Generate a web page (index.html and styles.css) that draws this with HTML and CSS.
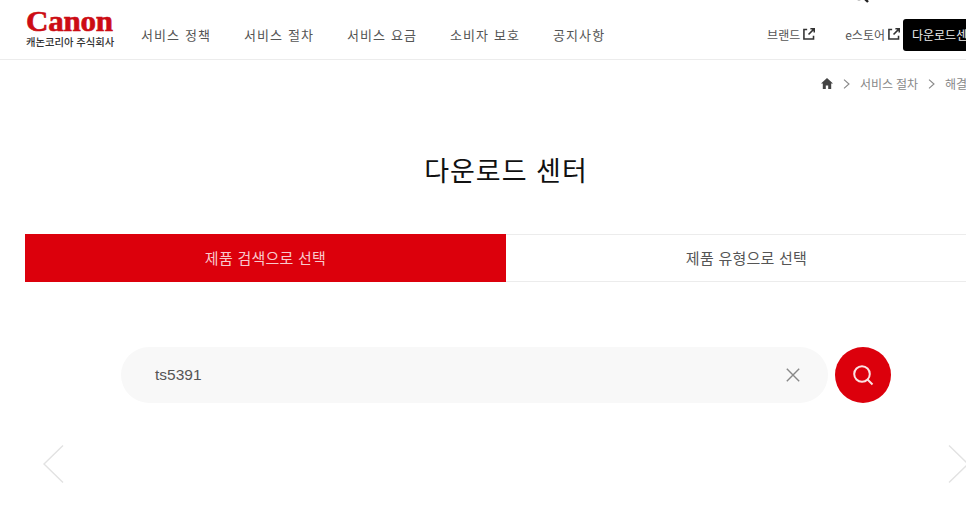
FILE: index.html
```html
<!DOCTYPE html>
<html lang="ko">

<head>
    <meta charset="UTF-8">
    <meta name="viewport" content="width=device-width, initial-scale=1.0">
    <title>다운로드 센터</title>
    <link rel="stylesheet" href="styles.css">
</head>

<body>
    <div class="page">
        <header class="top">
            <a class="logo" href="#">
                <span class="logo-mark">Canon</span>
                <span class="logo-sub">캐논코리아 주식회사</span>
            </a>
            <nav class="menu">
                <a href="#">서비스 정책</a>
                <a href="#">서비스 절차</a>
                <a href="#">서비스 요금</a>
                <a href="#">소비자 보호</a>
                <a href="#">공지사항</a>
            </nav>
            <div class="util">
                <a class="ext" href="#">브랜드
                    <svg width="12" height="12" viewBox="0 0 13 13" fill="none" stroke="#333" stroke-width="1.7">
                        <path d="M4.5 1.6H1V12H11.4V8.5" />
                        <path d="M6 7L12 1M8 .8H12.2V5" />
                    </svg>
                </a>
                <a class="ext ext-store" href="#">e스토어
                    <svg width="12" height="12" viewBox="0 0 13 13" fill="none" stroke="#333" stroke-width="1.7">
                        <path d="M4.5 1.6H1V12H11.4V8.5" />
                        <path d="M6 7L12 1M8 .8H12.2V5" />
                    </svg>
                </a>
                <a class="download" href="#">다운로드센터</a>
            </div>
            <svg class="top-search" width="18" height="18" viewBox="0 0 18 18" fill="none" stroke="#222" stroke-width="2.4">
                <circle cx="8" cy="8" r="6" />
                <path d="M12.5 12.5L17 17" />
            </svg>
        </header>

        <div class="crumbs">
            <svg width="12" height="11" viewBox="0 0 12 11" fill="#444">
                <path d="M6 0L12 5.4H10.2V11H7.2V7.4H4.8V11H1.8V5.4H0Z" />
            </svg>
            <svg class="crumb-arrow" width="7" height="10" viewBox="0 0 7 10" fill="none" stroke="#888" stroke-width="1.1">
                <path d="M1 .6L6 5L1 9.4" />
            </svg>
            <span>서비스 절차</span>
            <svg class="crumb-arrow" width="7" height="10" viewBox="0 0 7 10" fill="none" stroke="#888" stroke-width="1.1">
                <path d="M1 .6L6 5L1 9.4" />
            </svg>
            <span>해결 방법</span>
        </div>

        <h1 class="title">다운로드 센터</h1>

        <div class="tabs">
            <a class="tab active" href="#">제품 검색으로 선택</a>
            <a class="tab" href="#">제품 유형으로 선택</a>
        </div>

        <form class="search">
            <div class="search-box">
                <span class="search-text">ts5391</span>
                <svg width="14" height="14" viewBox="0 0 14 14" fill="none" stroke="#888" stroke-width="1.4">
                    <path d="M.8 .8L13.2 13.2M13.2 .8L.8 13.2" />
                </svg>
            </div>
            <button class="search-btn" type="button">
                <svg width="22" height="22" viewBox="0 0 22 22" fill="none" stroke="#fbe3e3" stroke-width="2">
                    <circle cx="10" cy="10" r="7.8" />
                    <path d="M15.5 15.5L20.5 20.5" />
                </svg>
            </button>
        </form>

        <div class="slider">
            <svg width="21" height="38" viewBox="0 0 21 38" fill="none" stroke="#e2e2e2" stroke-width="1.4">
                <path d="M20 .6L1 19L20 37.4" />
            </svg>
            <svg width="21" height="38" viewBox="0 0 21 38" fill="none" stroke="#e2e2e2" stroke-width="1.4">
                <path d="M1 .6L20 19L1 37.4" />
            </svg>
        </div>
    </div>
</body>

</html>
```

FILE: styles.css
```css
* {
    padding: 0;
    margin: 0;
    box-sizing: border-box;
    text-decoration: none;
}

html,
body {
    height: 100%;
    overflow: hidden;
}

body {
    background: white;
    font-family: "Noto Sans CJK KR", "Noto Sans", sans-serif;
    color: #333;
}

/* wider than the window, the right side runs off */
.page {
    width: 1012px;
}

.top {
    position: relative;
    height: 60px;
    display: flex;
    align-items: center;
    padding: 10px 24px 0 26px;
    border-bottom: 1px solid #ececec;
}

.logo {
    width: 115px;
    display: flex;
    flex-direction: column;
    margin-top: -10px;
}

.logo-mark {
    font-family: "Liberation Serif", serif;
    font-weight: bold;
    font-size: 29px;
    line-height: 21px;
    letter-spacing: -0.2px;
    color: #cc0c14;
    -webkit-text-stroke: 0.6px #cc0c14;
    transform: scaleX(1.07);
    transform-origin: left;
}

.logo-sub {
    font-size: 10.3px;
    line-height: 13px;
    margin-top: 3px;
    font-weight: 500;
    color: #333;
    white-space: nowrap;
}

.menu {
    display: flex;
    margin-top: -1px;
}

.menu a {
    width: 103px;
    font-size: 13px;
    letter-spacing: 1.1px;
    color: #555;
    white-space: nowrap;
}

.util {
    margin-left: auto;
    display: flex;
    align-items: center;
}

.ext {
    display: flex;
    align-items: center;
    gap: 3px;
    margin-top: -1px;
    font-size: 12px;
    color: #555;
    white-space: nowrap;
}

.ext-store {
    margin-left: 30px;
}

.download {
    width: 85px;
    height: 32px;
    margin-left: 3px;
    padding-left: 9px;
    line-height: 31px;
    font-size: 12px;
    color: #eee;
    background: black;
    border-radius: 3px;
    white-space: nowrap;
}

.top-search {
    position: absolute;
    left: 851px;
    top: -15px;
}

.crumbs {
    height: 47px;
    padding-left: 821px;
    display: flex;
    align-items: center;
    font-size: 12px;
    letter-spacing: -0.1px;
    color: #888;
    white-space: nowrap;
}

.crumb-arrow {
    margin: 0 10px;
}

.title {
    margin-top: 44px;
    text-align: center;
    font-size: 27px;
    font-weight: 400;
    line-height: 38px;
    letter-spacing: 1px;
    color: #111;
}

.tabs {
    margin: 45px 25px 0;
    display: flex;
}

.tab {
    flex: 1;
    height: 48px;
    line-height: 46px;
    text-align: center;
    font-size: 15px;
    letter-spacing: 0.25px;
    color: #555;
    border-top: 1px solid #ececec;
    border-bottom: 1px solid #ececec;
}

.tab.active {
    background: #dc000c;
    color: #f8c9cc;
    border-color: #dc000c;
}

.search {
    margin-top: 65px;
    display: flex;
    justify-content: center;
    gap: 7px;
}

.search-box {
    width: 707px;
    height: 56px;
    padding: 0 28px 0 34px;
    display: flex;
    align-items: center;
    justify-content: space-between;
    background: #f8f8f8;
    border-radius: 28px;
}

.search-text {
    font-family: "Liberation Sans", sans-serif;
    font-size: 15.5px;
    color: #555;
}

.search-btn {
    width: 56px;
    height: 56px;
    display: flex;
    align-items: center;
    justify-content: center;
    background: #dc000c;
    border: none;
    border-radius: 50%;
}

.slider {
    margin-top: 42px;
    padding: 0 43px;
    display: flex;
    justify-content: space-between;
}
```
